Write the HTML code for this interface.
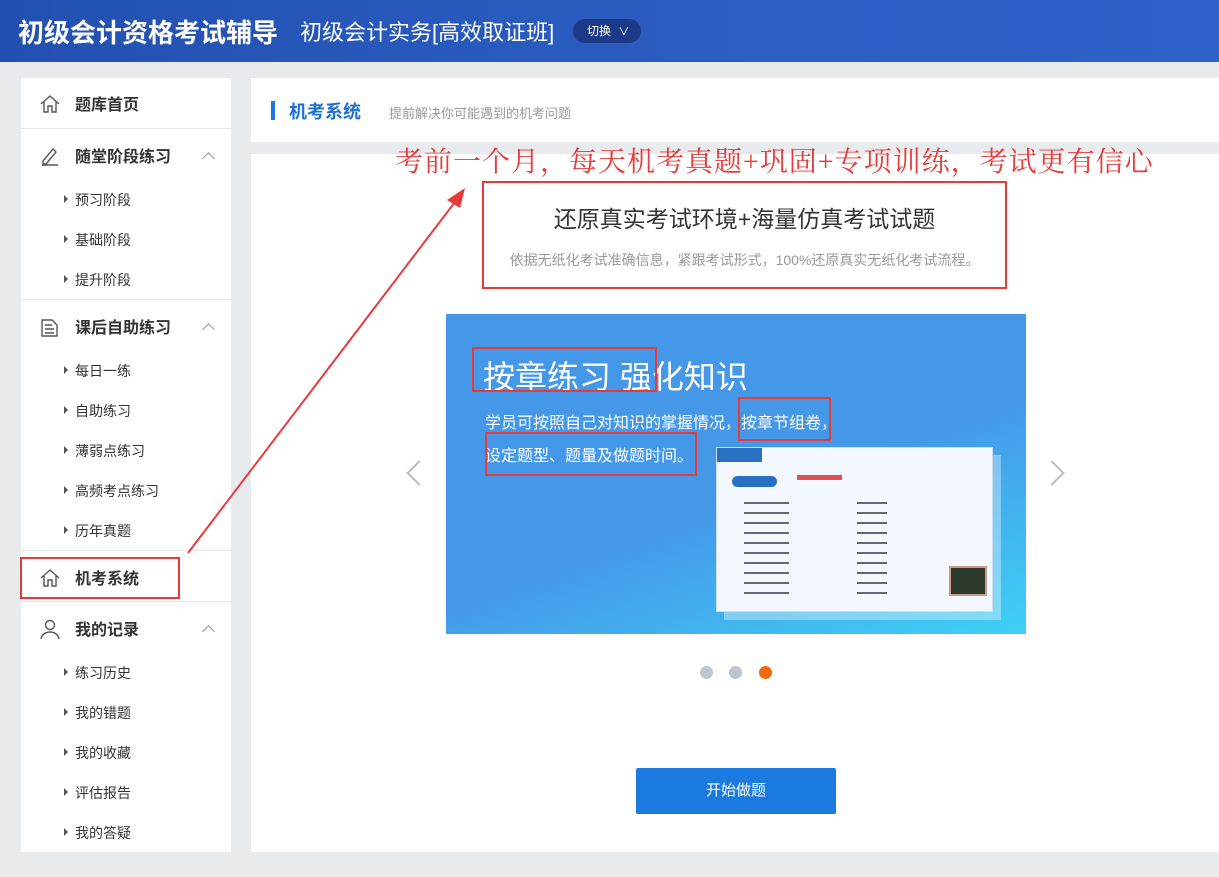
<!DOCTYPE html><html><head><meta charset="utf-8"><style>
*{margin:0;padding:0;box-sizing:border-box}
body{width:1219px;height:877px;background:#e8ebee;font-family:"Liberation Sans","Noto Sans CJK SC",sans-serif;position:relative;overflow:hidden}
.hd{position:absolute;left:0;top:0;width:1219px;height:62px;background:linear-gradient(90deg,#2350b0,#2a5cc0 50%,#2d62c8)}
.hd .t1{position:absolute;left:18px;top:13px;color:#fff;font-size:26px;font-weight:bold}
.hd .t2{position:absolute;left:300px;top:15px;color:#fff;font-size:22px}
.hd .sw{position:absolute;left:573px;top:19px;width:68px;height:24px;border-radius:12px;background:#1c3a88;color:#fff;font-size:12px;line-height:24px;padding-left:14px}
.sb{position:absolute;left:21px;top:78px;width:210px;height:774px;background:#fff}
.it{position:absolute;left:0;width:210px;font-size:16px;font-weight:bold;color:#333}
.it span{position:absolute;left:54px;top:-2px}
.sub{position:absolute;left:54px;font-size:14px;color:#333}
.sub:before{content:"";position:absolute;left:-11px;top:5px;border-left:4px solid #555;border-top:4px solid transparent;border-bottom:4px solid transparent}
.dv{position:absolute;left:0;width:210px;height:1px;background:#e6e6e6}
.car{position:absolute;left:183px;width:9px;height:9px;border-left:1.5px solid #999;border-top:1.5px solid #999;transform:rotate(45deg)}
.ic{position:absolute;left:18px}
.box{position:absolute;background:#fff}
.red{position:absolute;border:2px solid #e83a3a}
</style></head><body>
<div class="hd"><div class="t1">初级会计资格考试辅导</div><div class="t2">初级会计实务[高效取证班]</div><div class="sw">切换 <span style="font-size:11px;margin-left:4px">∨</span></div></div>
<div class="sb">
<div class="it" style="top:15px"><svg class="ic" width="22" height="22" viewBox="0 0 22 22" fill="none" stroke="#555" stroke-width="1.4"><path d="M2 11L11 3l9 8M5 9v10h4v-6h4v6h4V9"/></svg><span>题库首页</span></div>
<div class="dv" style="top:50px"></div>
<div class="it" style="top:67px"><svg class="ic" width="22" height="22" viewBox="0 0 22 22" fill="none" stroke="#555" stroke-width="1.4"><path d="M4 16L14 4l3 3L7 19H4zM3 20h16"/></svg><span>随堂阶段练习</span></div><div class="car" style="top:76px"></div>
<div class="sub" style="top:112px">预习阶段</div><div class="sub" style="top:152px">基础阶段</div><div class="sub" style="top:192px">提升阶段</div>
<div class="dv" style="top:221px"></div>
<div class="it" style="top:238px"><svg class="ic" width="22" height="22" viewBox="0 0 22 22" fill="none" stroke="#555" stroke-width="1.4"><path d="M3 4h10l5 5v11H3zM6 9h7M6 13h9M6 17h9"/></svg><span>课后自助练习</span></div><div class="car" style="top:247px"></div>
<div class="sub" style="top:283px">每日一练</div><div class="sub" style="top:323px">自助练习</div><div class="sub" style="top:363px">薄弱点练习</div><div class="sub" style="top:403px">高频考点练习</div><div class="sub" style="top:443px">历年真题</div>
<div class="dv" style="top:472px"></div>
<div class="it" style="top:489px"><svg class="ic" width="22" height="22" viewBox="0 0 22 22" fill="none" stroke="#555" stroke-width="1.4"><path d="M2 11L11 3l9 8M5 9v10h4v-6h4v6h4V9"/></svg><span>机考系统</span></div>
<div class="dv" style="top:523px"></div>
<div class="it" style="top:540px"><svg class="ic" width="22" height="22" viewBox="0 0 22 22" fill="none" stroke="#555" stroke-width="1.4"><circle cx="11" cy="7" r="4.5"/><path d="M2 21c1-5 5-7 9-7s8 2 9 7"/></svg><span>我的记录</span></div><div class="car" style="top:549px"></div>
<div class="sub" style="top:585px">练习历史</div><div class="sub" style="top:625px">我的错题</div><div class="sub" style="top:665px">我的收藏</div><div class="sub" style="top:705px">评估报告</div><div class="sub" style="top:745px">我的答疑</div>
</div>
<div class="red" style="left:20px;top:557px;width:160px;height:42px"></div>
<div class="box" style="left:251px;top:78px;width:968px;height:64px">
<div style="position:absolute;left:20px;top:23px;width:4px;height:19px;background:#1a7ae0"></div>
<div style="position:absolute;left:38px;top:20px;font-size:18px;font-weight:bold;color:#1a6fd6">机考系统</div>
<div style="position:absolute;left:138px;top:25px;font-size:13px;color:#999">提前解决你可能遇到的机考问题</div></div>
<div class="box" style="left:251px;top:154px;width:968px;height:698px"></div>
<div style="position:absolute;left:395px;top:140px;font-size:28px;letter-spacing:1px;color:#e83a3a;font-family:'Liberation Serif','Noto Serif CJK SC',serif;white-space:nowrap">考前一个月，每天机考真题+巩固+专项训练，考试更有信心</div>
<div class="red" style="left:482px;top:181px;width:525px;height:108px"></div>
<div style="position:absolute;left:482px;top:200px;width:525px;text-align:center;font-size:23px;color:#333">还原真实考试环境+海量仿真考试试题</div>
<div style="position:absolute;left:482px;top:250px;width:525px;text-align:center;font-size:14px;color:#999">依据无纸化考试准确信息，紧跟考试形式，100%还原真实无纸化考试流程。</div>
<div style="position:absolute;left:446px;top:314px;width:580px;height:320px;background:linear-gradient(160deg,#4598e8 55%,#3fd0f5);overflow:hidden">
<div style="position:absolute;left:37px;top:38px;font-size:32px;color:#fff">按章练习 强化知识</div>
<div style="position:absolute;left:39px;top:95px;font-size:16px;color:#fff">学员可按照自己对知识的掌握情况，按章节组卷，</div>
<div style="position:absolute;left:39px;top:128px;font-size:16px;color:#fff">设定题型、题量及做题时间。</div>
<div style="position:absolute;left:270px;top:133px;width:277px;height:165px;background:#f2f8fd;border:1px solid #cde;box-shadow:8px 8px 0 rgba(255,255,255,.35)">
<div style="position:absolute;left:0;top:0;width:45px;height:14px;background:#2a70c0"></div>
<div style="position:absolute;left:15px;top:28px;width:45px;height:11px;border-radius:6px;background:#2a70c0"></div>
<div style="position:absolute;left:80px;top:27px;width:45px;height:5px;background:#e05050"></div>
<div style="position:absolute;left:27px;top:46px;width:45px;height:100px;background:repeating-linear-gradient(#f2f8fd 0 8px,#667 8px 10px)"></div>
<div style="position:absolute;left:140px;top:46px;width:30px;height:100px;background:repeating-linear-gradient(#f2f8fd 0 8px,#667 8px 10px)"></div>
<div style="position:absolute;left:232px;top:118px;width:38px;height:30px;background:#2c3a2c;border:2px solid #c98"></div></div>
</div>
<div class="red" style="left:472px;top:347px;width:185px;height:45px"></div>
<div class="red" style="left:738px;top:397px;width:93px;height:44px"></div>
<div class="red" style="left:485px;top:432px;width:212px;height:44px"></div>
<div style="position:absolute;left:410px;top:464px;width:18px;height:18px;border-left:2px solid #bbb;border-bottom:2px solid #bbb;transform:rotate(45deg)"></div>
<div style="position:absolute;left:1043px;top:464px;width:18px;height:18px;border-right:2px solid #bbb;border-top:2px solid #bbb;transform:rotate(45deg)"></div>
<div style="position:absolute;left:700px;top:666px;width:13px;height:13px;border-radius:50%;background:#bfc5cc"></div>
<div style="position:absolute;left:729px;top:666px;width:13px;height:13px;border-radius:50%;background:#bfc5cc"></div>
<div style="position:absolute;left:759px;top:666px;width:13px;height:13px;border-radius:50%;background:#f26a0f"></div>
<div style="position:absolute;left:636px;top:768px;width:200px;height:46px;background:#1a7ae0;border-radius:2px;color:#fff;font-size:15px;text-align:center;line-height:46px">开始做题</div>
<svg style="position:absolute;left:0;top:0" width="1219" height="877"><line x1="188" y1="553" x2="458" y2="198" stroke="#e83a3a" stroke-width="2"/><path d="M465 188L447 200L460 208Z" fill="#e83a3a"/></svg>
</body></html>
